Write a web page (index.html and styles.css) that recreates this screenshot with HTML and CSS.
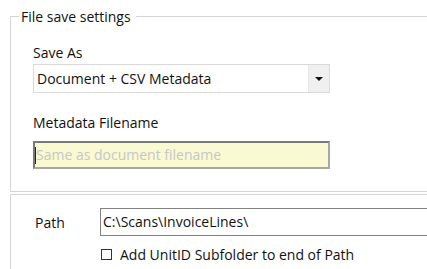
FILE: index.html
```html
<!DOCTYPE html>
<html lang="en">
<head>
    <meta charset="UTF-8">
    <meta name="viewport" content="width=device-width, initial-scale=1.0">
    <title>File save settings</title>
    <link rel="stylesheet" href="styles.css">
</head>
<body>
    <div class="settings-panel">
        <fieldset class="group-box">
            <legend>File save settings</legend>
            <div class="field">
                <label class="field-label">Save As</label>
                <div class="combo">
                    <span class="combo-text">Document + CSV Metadata</span>
                    <span class="combo-button"><span class="combo-arrow"></span></span>
                </div>
            </div>
            <div class="field">
                <label class="field-label">Metadata Filename</label>
                <div class="text-box required">
                    <span class="caret"></span>
                    <span class="placeholder">Same as document filename</span>
                </div>
            </div>
        </fieldset>

        <div class="path-box">
            <div class="path-row">
                <label class="path-label">Path</label>
                <div class="text-box path-input">C:\Scans\InvoiceLines\</div>
            </div>
            <label class="check-row">
                <span class="check"></span>
                Add UnitID Subfolder to end of Path
            </label>
        </div>
    </div>
</body>
</html>
```

FILE: styles.css
```css
body {
    font-family: 'Open Sans', 'Noto Sans', sans-serif;
    font-size: 14px;
    color: #111;
    background-color: #fff;
    margin: 0;
    padding: 0;
}

.settings-panel {
    padding: 7px 0 0 10px;
}

.group-box {
    margin: 0;
    border: 1px solid #d5d5d5;
    border-right: none;
    padding: 0 0 22px 22px;
}

.group-box legend {
    margin-left: -14px;
    padding: 0 5px 0 2px;
    line-height: 19px;
}

.field {
    display: flex;
    flex-direction: column;
}

.field-label {
    line-height: 19px;
    margin-top: 17px;
    margin-bottom: 2px;
}

.field + .field .field-label {
    margin-top: 20px;
    margin-bottom: 9px;
}

.combo {
    display: flex;
    width: 297px;
    height: 29px;
    box-sizing: border-box;
    border: 1px solid #dadada;
    background-color: #fff;
}

.combo-text {
    flex: 1;
    line-height: 27px;
    padding-left: 3px;
}

.combo-button {
    width: 20px;
    background-color: #f0f0f0;
    border-left: 1px solid #e8e8e8;
    display: flex;
    align-items: center;
    justify-content: center;
}

.combo-arrow {
    width: 0;
    height: 0;
    border-left: 4px solid transparent;
    border-right: 4px solid transparent;
    border-top: 4px solid #111;
}

.text-box {
    height: 28px;
    box-sizing: border-box;
    border: 1px solid #7a7a7a;
    line-height: 26px;
    padding-left: 2px;
    display: flex;
    align-items: center;
}

.required {
    width: 297px;
    background-color: #fafad2;
    border: 2px solid #858585;
    border-color: #7a7a7a #a8a8a8 #a8a8a8 #7a7a7a;
    padding-left: 0;
}

.caret {
    width: 1px;
    height: 17px;
    background-color: #1a1a6e;
}

.placeholder {
    color: #c6c6c6;
}

.path-box {
    margin-top: 2px;
    border-top: 1px solid #d5d5d5;
    border-left: 1px solid #d5d5d5;
    padding: 13px 0 6px 24px;
}

.path-row {
    display: flex;
    align-items: center;
}

.path-label {
    width: 65px;
}

.path-input {
    flex: 1;
    background-color: #fff;
    border-color: #828282;
    border-right: none;
}

.check-row {
    display: flex;
    align-items: center;
    margin: 9px 0 0 66px;
    line-height: 19px;
}

.check {
    width: 11px;
    height: 11px;
    border: 1px solid #333;
    box-sizing: border-box;
    margin: 0 8px 0 0;
    background-color: #fff;
}
```
